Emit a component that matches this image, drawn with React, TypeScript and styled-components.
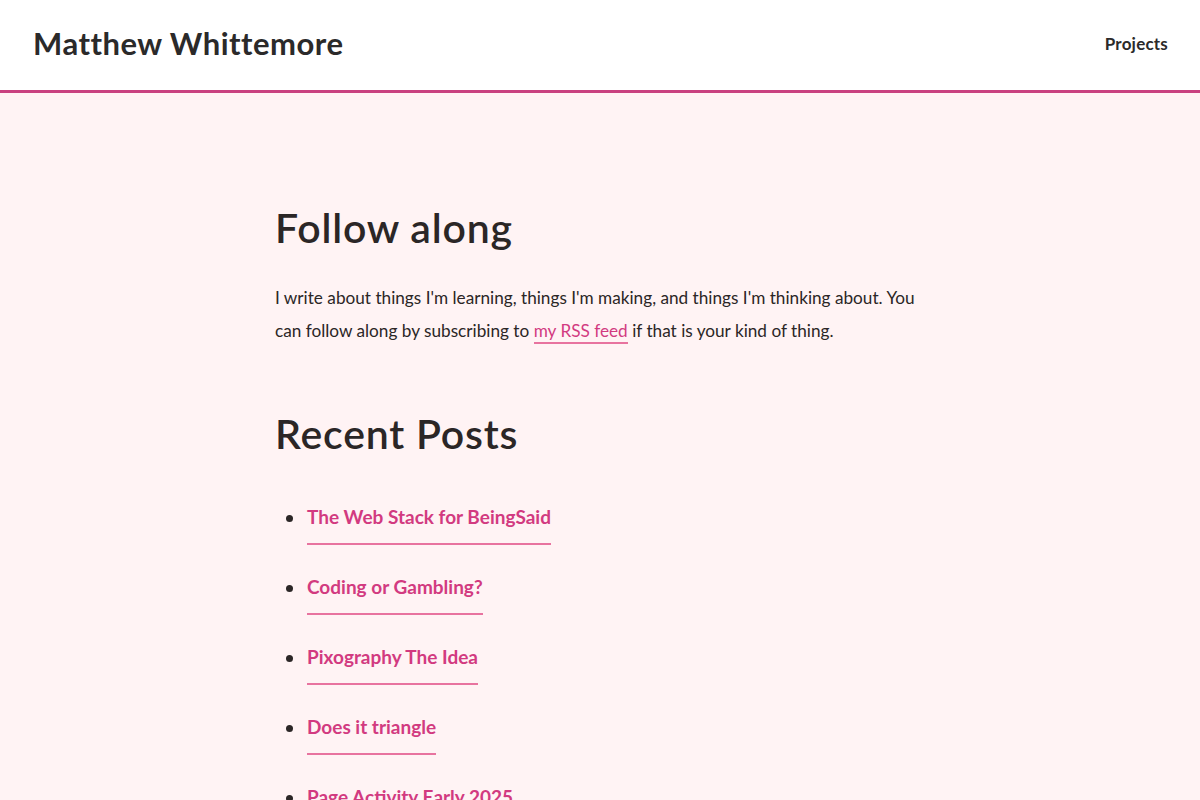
import React from "react";
import styled, { createGlobalStyle } from "styled-components";

const GlobalStyle = createGlobalStyle`
  html, body {
    margin: 0;
    padding: 0;
    background: #fff3f4;
  }
  body {
    font-family: Lato, "Noto Sans", sans-serif;
    color: #2b2626;
  }
`;

const Header = styled.header`
  display: flex;
  align-items: center;
  justify-content: space-between;
  height: 93px;
  padding: 0 32px 4px 33px;
  box-sizing: border-box;
  background: #ffffff;
  border-bottom: 3px solid #c9407f;
`;

const SiteTitle = styled.a`
  font-family: Lato, sans-serif;
  font-weight: 700;
  font-size: 31px;
  letter-spacing: 0.5px;
  color: #2b2a2a;
  text-decoration: none;
`;

const NavLink = styled.a`
  font-family: Lato, sans-serif;
  font-weight: 700;
  font-size: 17px;
  letter-spacing: 0.2px;
  color: #2b2a2a;
  text-decoration: none;
`;

const Main = styled.main`
  max-width: 650px;
  margin: 0 auto;
  padding: 110px 0 0;
`;

const Heading = styled.h2`
  font-family: Lato, sans-serif;
  font-weight: 600;
  font-size: 41px;
  letter-spacing: 0.8px;
  line-height: 1.2;
  margin: 0 0 29px;
  color: #2b2626;
`;

const Paragraph = styled.p`
  font-size: 17.2px;
  line-height: 33px;
  margin: 0 0 62px;
`;

const InlineLink = styled.a`
  color: #d23a80;
  text-decoration: none;
  border-bottom: 2px solid #e8739f;
  padding-bottom: 1px;
`;

const PostList = styled.ul`
  margin: 45px 0 0;
  padding-left: 32px;
`;

const PostItem = styled.li`
  margin-bottom: 28px;
  font-size: 22px;
  &::marker {
    color: #2b2626;
  }
`;

const PostLink = styled.a`
  display: inline-block;
  vertical-align: top;
  font-weight: 700;
  font-size: 19px;
  line-height: 28px;
  color: #d23a80;
  text-decoration: none;
  padding-bottom: 12px;
  border-bottom: 2px solid #e8739f;
`;

const posts = [
  "The Web Stack for BeingSaid",
  "Coding or Gambling?",
  "Pixography The Idea",
  "Does it triangle",
  "Page Activity Early 2025",
];

export default function App() {
  return (
    <>
      <GlobalStyle />
      <Header>
        <SiteTitle href="#">Matthew Whittemore</SiteTitle>
        <NavLink href="#">Projects</NavLink>
      </Header>
      <Main>
        <Heading>Follow along</Heading>
        <Paragraph>
          I write about things I'm learning, things I'm making, and things I'm
          thinking about. You can follow along by subscribing to{" "}
          <InlineLink href="#">my RSS feed</InlineLink> if that is your kind of
          thing.
        </Paragraph>
        <Heading>Recent Posts</Heading>
        <PostList>
          {posts.map((title) => (
            <PostItem key={title}>
              <PostLink href="#">{title}</PostLink>
            </PostItem>
          ))}
        </PostList>
      </Main>
    </>
  );
}
